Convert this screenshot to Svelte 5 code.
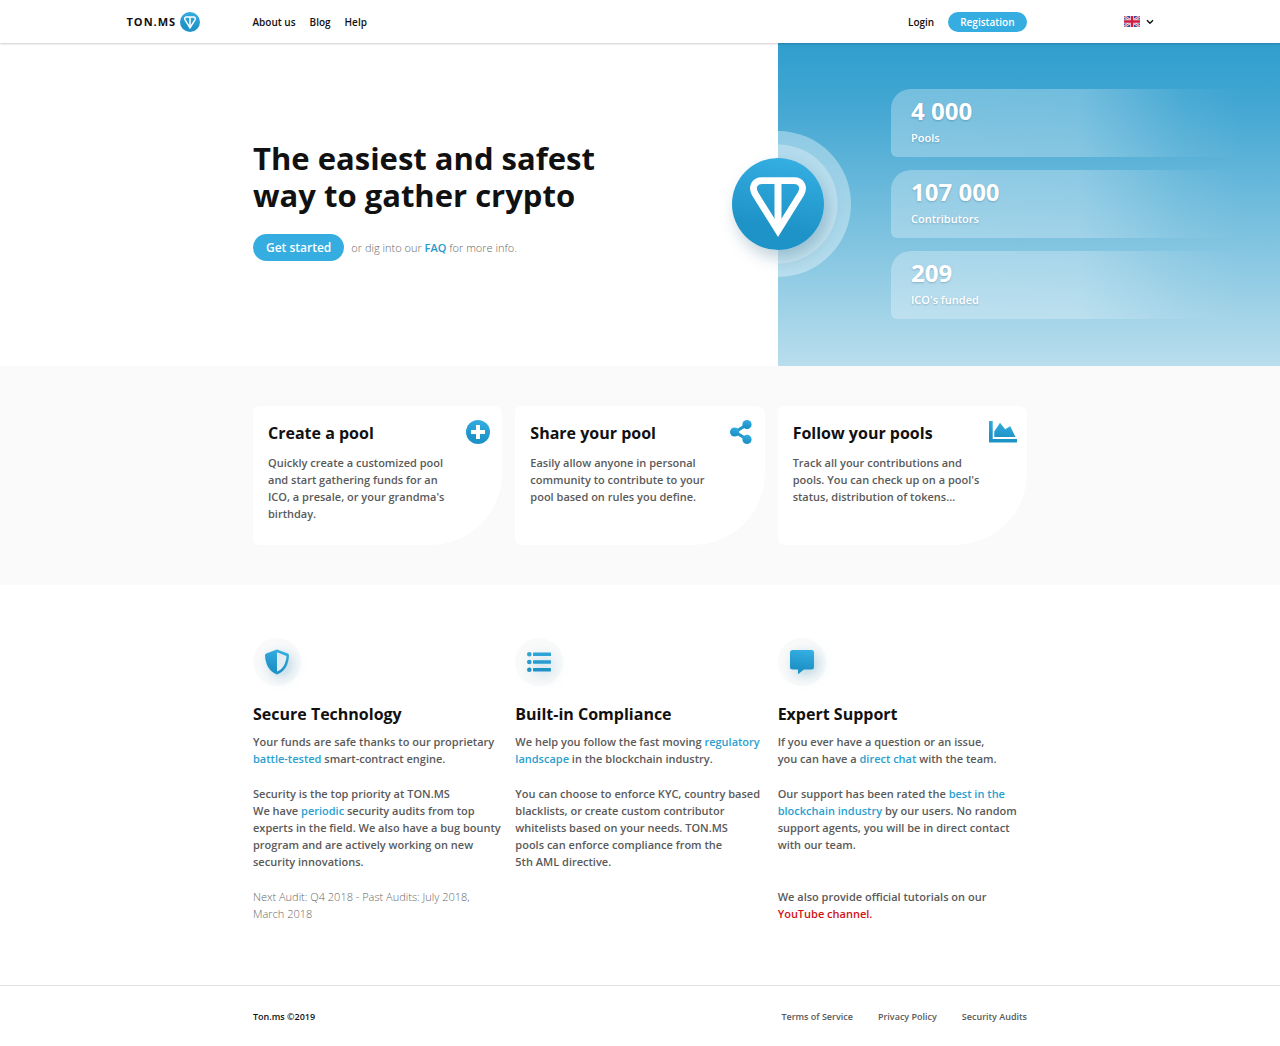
<script>
  const stats = [
    { value: '4 000', label: 'Pools' },
    { value: '107 000', label: 'Contributors' },
    { value: '209', label: "ICO's funded" }
  ];
</script>

{#snippet tonMark()}
  <svg class="mark" viewBox="0 0 92 92" aria-hidden="true">
    <circle cx="46" cy="46" r="46" fill="url(#brand)" />
    <path
      d="M46 72.500 23.200 36C19.200 29 22.600 22.700 30 22.700H62C69.400 22.700 72.800 29 68.800 36Z"
      fill="none"
      stroke="#fff"
      stroke-width="6.800"
      stroke-miterlimit="8"
    />
    <path d="M46 23V72" stroke="#fff" stroke-width="7" />
  </svg>
{/snippet}

<svg class="defs" width="0" height="0" aria-hidden="true">
  <defs>
    <linearGradient id="brand" x1="0.6" y1="0" x2="0.4" y2="1">
      <stop offset="0" stop-color="#35aee2" />
      <stop offset="0.75" stop-color="#1e93c8" />
    </linearGradient>
  </defs>
</svg>

<header>
  <div class="bar">
    <a class="logo" href="#home"><span>TON.MS</span>{@render tonMark()}</a>
    <div class="menu">
      <nav aria-label="Main">
        <a href="#about">About us</a>
        <a href="#blog">Blog</a>
        <a href="#help">Help</a>
      </nav>
      <div class="account">
        <a href="#login">Login</a>
        <button class="pill small" type="button">Registation</button>
      </div>
    </div>
    <button class="lang" type="button" aria-label="Language: English" aria-haspopup="menu">
      <svg width="16" height="11" viewBox="0 0 16 11" aria-hidden="true">
        <rect width="16" height="11" fill="#34509f" />
        <path d="M0 0 16 11M16 0 0 11" stroke="#f3eef4" stroke-width="2.4" />
        <path d="M0 0 16 11M16 0 0 11" stroke="#d4304f" stroke-width="1" />
        <path d="M8 0V11M0 5.5H16" stroke="#f6eef2" stroke-width="3.8" />
        <path d="M8 0V11M0 5.5H16" stroke="#d01c40" stroke-width="2.4" />
      </svg>
      <svg width="8" height="6" viewBox="0 0 8 6" aria-hidden="true">
        <path d="M1 1.2 4 4.2 7 1.2" fill="none" stroke="#111" stroke-width="1.4" />
      </svg>
    </button>
  </div>
</header>

<main>
  <section class="hero">
    <div class="pitch">
      <h1>The easiest and safest<br />way to gather crypto</h1>
      <div class="cta">
        <button class="pill" type="button">Get started</button>
        <p>or dig into our <a href="#faq">FAQ</a> for more info.</p>
      </div>
    </div>
    <div class="panel">
      <div class="halos"></div>
      <div class="badge">{@render tonMark()}</div>
      <dl>
        {#each stats as stat}
          <div class="stat">
            <dd>{stat.value}</dd>
            <dt>{stat.label}</dt>
          </div>
        {/each}
      </dl>
    </div>
  </section>

  <section class="band">
    <div class="columns">
      <article class="card">
        <h2>Create a pool</h2>
        <svg width="28" height="24" viewBox="0 0 28 24" aria-hidden="true">
          <circle cx="14" cy="12" r="12" fill="url(#brand)" />
          <path d="M14 5V19M7 12H21" stroke="#fff" stroke-width="4" />
        </svg>
        <p>Quickly create a customized pool<br />and start gathering funds for an<br />ICO, a presale, or your grandma's<br />birthday.</p>
      </article>
      <article class="card">
        <h2>Share your pool</h2>
        <svg width="28" height="24" viewBox="0 0 28 24" aria-hidden="true">
          <path d="M20 4.600 8 12 20 19.400" fill="none" stroke="#2499cd" stroke-width="3" />
          <g fill="url(#brand)">
            <circle cx="20" cy="4.600" r="4.600" />
            <circle cx="7.600" cy="12" r="4.600" />
            <circle cx="20" cy="19.400" r="4.600" />
          </g>
        </svg>
        <p>Easily allow anyone in personal<br />community to contribute to your<br />pool based on rules you define.</p>
      </article>
      <article class="card">
        <h2>Follow your pools</h2>
        <svg width="28" height="24" viewBox="0 0 28 24" aria-hidden="true">
          <path
            d="M0 1H3.700V19H28V22.500H0ZM5.300 17V11.500L11 2.700 16.200 9.300 21.200 6.300 26.500 17Z"
            fill="url(#brand)"
          />
        </svg>
        <p>Track all your contributions and<br />pools. You can check up on a pool's<br />status, distribution of tokens...</p>
      </article>
    </div>
  </section>

  <section class="features">
    <div class="columns">
      <article>
        <div class="disc">
          <svg width="24" height="26" viewBox="0 0 24 26" aria-hidden="true">
            <path d="M12 0.400 22.800 4.600Q24 5.200 24 6.500C23.500 16 19.500 22.500 12 25.600 4.500 22.500 0.500 16 0 6.500Q0 5.200 1.200 4.600Z" fill="url(#brand)" />
            <path d="M12 3.200 21.500 6.900C21 14.500 18 19.800 12 22.600Z" fill="#e3edf2" />
          </svg>
        </div>
        <h2>Secure Technology</h2>
        <p>Your funds are safe thanks to our proprietary <a href="#battle-tested">battle-tested</a> smart-contract engine.</p>
        <p>Security is the top priority at TON.MS<br />We have <a href="#audits">periodic</a> security audits from top<br />experts in the field. We also have a bug bounty<br />program and are actively working on new<br />security innovations.</p>
        <p class="note">Next Audit: Q4 2018 - Past Audits: July 2018,<br />March 2018</p>
      </article>
      <article>
        <div class="disc">
          <svg width="24" height="20" viewBox="0 0 24 20" aria-hidden="true">
            <g fill="#2fa3d6">
              <circle cx="2.300" cy="2.300" r="2.300" />
              <rect x="6" y="0.600" width="18" height="3.400" rx="0.600" />
            </g>
            <g fill="#289bcf">
              <circle cx="2.300" cy="10" r="2.300" />
              <rect x="6" y="8.300" width="18" height="3.400" rx="0.600" />
            </g>
            <g fill="#2192c6">
              <circle cx="2.300" cy="17.700" r="2.300" />
              <rect x="6" y="16" width="18" height="3.400" rx="0.600" />
            </g>
          </svg>
        </div>
        <h2>Built-in Compliance</h2>
        <p>We help you follow the fast moving <a href="#regulatory">regulatory<br />landscape</a> in the blockchain industry.</p>
        <p>You can choose to enforce KYC, country based<br />blacklists, or create custom contributor<br />whitelists based on your needs. TON.MS<br />pools can enforce compliance from the<br />5th AML directive.</p>
      </article>
      <article>
        <div class="disc">
          <svg width="24" height="26" viewBox="0 0 24 26" aria-hidden="true">
            <path
              d="M2.500 1H21.500Q24 1 24 3.500V18Q24 20.500 21.500 20.500H14L8 25.300V20.500H2.500Q0 20.500 0 18V3.500Q0 1 2.500 1Z"
              fill="url(#brand)"
            />
          </svg>
        </div>
        <h2>Expert Support</h2>
        <p>If you ever have a question or an issue,<br />you can have a <a href="#chat">direct chat</a> with the team.</p>
        <p>Our support has been rated the <a href="#rating">best in the<br />blockchain industry</a> by our users. No random<br />support agents, you will be in direct contact<br />with our team.</p>
        <p class="last">We also provide official tutorials on our<br /><a class="youtube" href="#youtube">YouTube channel.</a></p>
      </article>
    </div>
  </section>
</main>

<footer>
  <div class="foot">
    <strong>Ton.ms ©2019</strong>
    <nav aria-label="Legal">
      <a href="#terms">Terms of Service</a>
      <a href="#privacy">Privacy Policy</a>
      <a href="#security">Security Audits</a>
    </nav>
  </div>
</footer>

<style>
  :global(body) {
    margin: 0;
    background: #fff;
    color: #111;
    font-family: 'Open Sans', 'Noto Sans', sans-serif;
  }

  h1, h2, p, dl, dt, dd {
    margin: 0;
  }

  a {
    color: inherit;
    text-decoration: none;
  }

  button {
    border: 0;
    padding: 0;
    background: none;
    font: inherit;
    cursor: pointer;
  }

  svg {
    display: block;
  }

  .defs {
    position: absolute;
  }

  header {
    position: relative;
    z-index: 2;
    background: #fff;
    box-shadow: 0 1px 2px rgba(0, 0, 0, 0.2);
    font-size: 10px;
    font-weight: 600;
  }

  .bar {
    display: grid;
    grid-template-columns: 126px 1fr 127px;
    align-items: center;
    max-width: 1027px;
    min-height: 43px;
    margin: 0 auto;
  }

  .logo {
    display: flex;
    align-items: center;
    gap: 4px;
    font-size: 11px;
    font-weight: 700;
    letter-spacing: 1px;
  }

  .logo .mark {
    width: 20px;
    height: 20px;
  }

  .menu, .account, .menu nav {
    display: flex;
    align-items: center;
    gap: 14px;
  }

  .menu {
    justify-content: space-between;
  }

  .pill {
    min-height: 27px;
    padding: 0 13px;
    border-radius: 14px;
    background: #35ade1;
    color: #fff;
    font-size: 12px;
    font-weight: 600;
  }

  .pill.small {
    min-height: 20px;
    padding: 0 12px;
    font-size: 10px;
  }

  .lang {
    display: flex;
    align-items: center;
    justify-self: end;
    gap: 6px;
  }

  .hero {
    display: grid;
    grid-template-columns: calc(50% + 138px) 1fr;
    min-height: 323px;
  }

  .pitch {
    display: flex;
    flex-direction: column;
    justify-content: center;
    gap: 20px;
    padding-bottom: 9px;
    padding-left: max(16px, calc(50vw - 387px));
  }

  h1 {
    font-size: 31px;
    line-height: 37px;
    font-weight: 700;
  }

  .cta {
    display: flex;
    align-items: center;
    gap: 7px;
    color: #686868;
    font-size: 11px;
    font-weight: 300;
  }

  .cta a {
    color: #2899cb;
    font-weight: 600;
  }

  .panel {
    position: relative;
    display: flex;
    align-items: center;
    padding: 0 0 2px 113px;
    background: linear-gradient(#309ece, #41a6d2 18%, #b9deed);
  }

  .panel dl {
    flex: 1;
    display: grid;
    gap: 13px;
  }

  .halos {
    position: absolute;
    left: 0;
    top: calc(50% - 74px);
    width: 73px;
    height: 146px;
    border-radius: 0 73px 73px 0;
    background: radial-gradient(circle at 0 50%, rgba(255, 255, 255, 0.55) 59px, rgba(255, 255, 255, 0.36) 60px);
  }

  .badge {
    position: absolute;
    left: -46px;
    top: calc(50% - 47px);
    width: 92px;
    height: 92px;
    border-radius: 50%;
    box-shadow: 4px 8px 16px rgba(30, 90, 120, 0.28);
  }

  .stat {
    box-sizing: border-box;
    display: flex;
    flex-direction: column;
    gap: 2px;
    min-height: 68px;
    padding: 5px 20px;
    border-radius: 20px 0 0 6px;
    background: linear-gradient(90deg, rgba(255, 255, 255, 0.29), rgba(255, 255, 255, 0.27) 48%, rgba(255, 255, 255, 0.06) 75%, transparent 90%);
    color: #fff;
    text-shadow: 0 1px 2px rgba(0, 60, 100, 0.25);
  }

  .stat dd {
    font-size: 24px;
    line-height: 33px;
    font-weight: 700;
  }

  .stat dt {
    font-size: 11px;
    line-height: 17px;
    font-weight: 600;
  }

  .band {
    padding: 40px 16px;
    background: #fafafa;
  }

  .columns {
    display: grid;
    grid-template-columns: repeat(3, 1fr);
    gap: 13px;
    max-width: 774px;
    margin: 0 auto;
    color: #5a5a5a;
    font-size: 11px;
    line-height: 17px;
    font-weight: 600;
  }

  h2 {
    color: #111;
    font-size: 16px;
    line-height: 22px;
    font-weight: 700;
  }

  .card {
    box-sizing: border-box;
    display: grid;
    grid-template-columns: 1fr auto;
    grid-template-rows: auto 1fr;
    row-gap: 8px;
    min-height: 139px;
    padding: 14px 10px 13px 15px;
    border-radius: 6px 8px 72px 6px;
    background: #fff;
  }

  .card h2 {
    line-height: 26px;
  }

  .card p {
    grid-column: 1 / -1;
  }

  .features {
    padding: 53px 16px 63px;
  }

  .features article {
    display: flex;
    flex-direction: column;
  }

  .features h2 {
    margin: 17px 0 8px;
  }

  .features p + p {
    margin-top: 18px;
  }

  .features p a {
    color: #2a9fd0;
  }

  .features .note {
    color: #686868;
    font-weight: 300;
  }

  .features p.last {
    margin-top: auto;
  }

  .features p .youtube {
    color: #d01515;
  }

  .disc {
    display: grid;
    place-items: center;
    width: 48px;
    height: 48px;
    border-radius: 50%;
    background: #fafafa;
  }

  .disc svg {
    overflow: visible;
    filter: drop-shadow(4px 4px 7px rgba(20, 120, 165, 0.3));
  }

  footer {
    border-top: 1px solid #e3e3e3;
    padding: 0 16px;
    font-size: 9px;
    font-weight: 600;
  }

  .foot {
    display: flex;
    align-items: center;
    justify-content: space-between;
    max-width: 774px;
    min-height: 60px;
    margin: 0 auto;
  }

  .foot strong {
    font-weight: 600;
  }

  .foot nav {
    display: flex;
    gap: 25px;
    color: #5a5a5a;
  }
</style>
